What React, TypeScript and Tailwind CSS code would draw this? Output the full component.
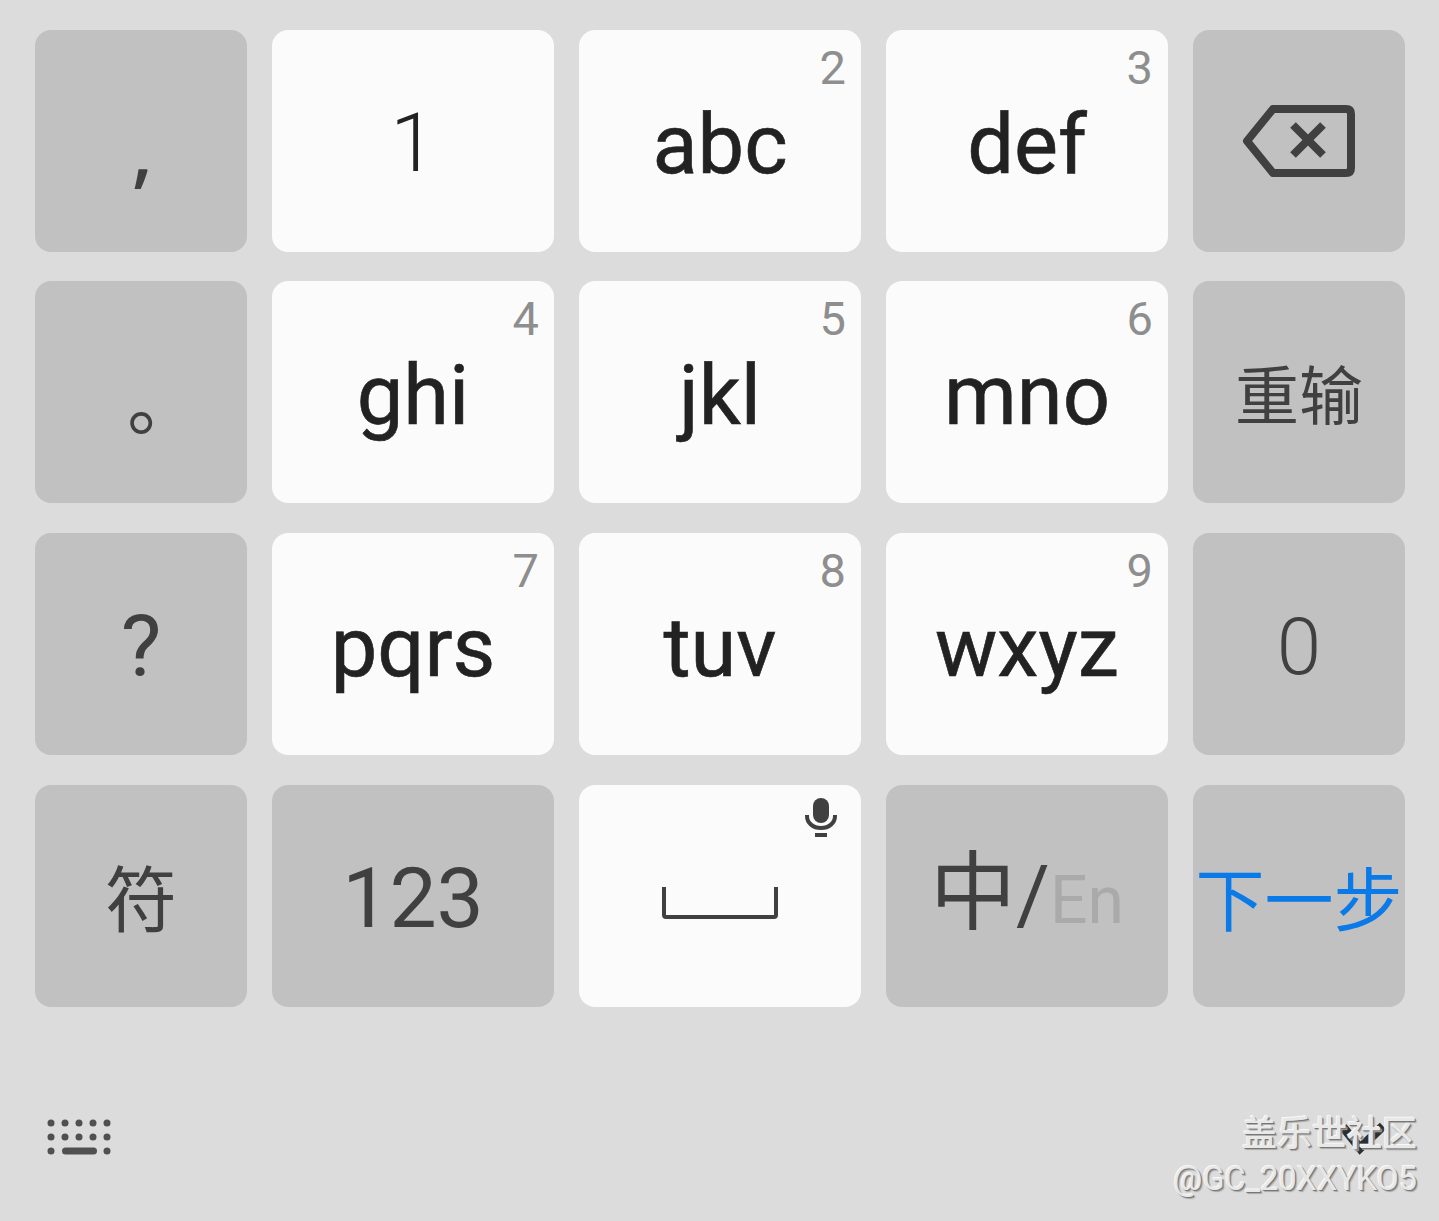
import type { ReactNode } from "react";

const ROBOTO = "font-['Roboto','Liberation_Sans',sans-serif]";
const CJK = "font-['Noto_Sans_CJK_SC',sans-serif]";

type KeyProps = {
  width: "narrow" | "wide";
  light?: boolean;
  hint?: string;
  children?: ReactNode;
};

function Key({ width, light, hint, children }: KeyProps) {
  return (
    <div
      className={`relative flex h-[222px] shrink-0 items-center justify-center rounded-[16px] ${
        width === "narrow" ? "w-[212px]" : "w-[282px]"
      } ${light ? "bg-[#fbfbfb] text-[#222222]" : "bg-[#c1c1c1] text-[#404040]"}`}
    >
      {hint && (
        <span className="absolute right-[15px] top-[10px] text-[47px] leading-[56px] text-[#8e8e8e]">
          {hint}
        </span>
      )}
      {children}
    </div>
  );
}

function Letters({ children }: { children: string }) {
  return <span className="mt-[6px] text-[83px] leading-none [-webkit-text-stroke:0.6px_#222222]">{children}</span>;
}

function Backspace() {
  return (
    <svg width="114" height="72" viewBox="0 0 114 72" className="text-[#404040]" fill="none">
      <path
        d="M31 4H104Q109 4 109 9V63Q109 68 104 68H31L5 36Z"
        stroke="currentColor"
        strokeWidth="8"
        strokeLinejoin="round"
      />
      <path d="M51 20L81 50M81 20L51 50" stroke="currentColor" strokeWidth="8" />
    </svg>
  );
}

function Mic() {
  return (
    <svg width="32" height="40" viewBox="0 0 32 40" className="absolute right-[24px] top-[13px]" fill="none">
      <rect x="8" y="0" width="16" height="25" rx="8" fill="#404040" />
      <path d="M2 17V18C2 25 8 30 16 30C24 30 30 25 30 18V17" stroke="#404040" strokeWidth="4" />
      <rect x="10" y="35" width="12" height="4" fill="#404040" />
    </svg>
  );
}

function SpaceBar() {
  return (
    <svg width="118" height="34" viewBox="0 0 118 34" className="mt-[14px]" fill="none">
      <path d="M3 1V29Q3 31 5 31H113Q115 31 115 29V1" stroke="#404040" strokeWidth="4" />
    </svg>
  );
}

function KeyboardIcon() {
  const dots = [0, 14, 28, 42, 56];
  return (
    <svg width="64" height="36" viewBox="0 0 64 36" fill="#505050">
      {dots.map((x) => (
        <circle key={`a${x}`} cx={x + 4} cy="4" r="3.5" />
      ))}
      {dots.map((x) => (
        <circle key={`b${x}`} cx={x + 4} cy="18" r="3.5" />
      ))}
      <circle cx="4" cy="32" r="3.5" />
      <rect x="15" y="28.5" width="35" height="7" rx="3.5" />
      <circle cx="60" cy="32" r="3.5" />
    </svg>
  );
}

export default function App() {
  return (
    <div className={`relative h-[1221px] w-[1439px] overflow-hidden bg-[#dcdcdc] pl-[35px] pt-[30px] ${ROBOTO}`}>
      <div className="mb-[29px] flex gap-[25px]">
        <Key width="narrow">
          <span className="ml-[3px] mt-[14px] font-['Noto_Sans',sans-serif] text-[80px] font-medium leading-none">,</span>
        </Key>
        <Key width="wide" light>
          <span className="mt-[4px] text-[82px] font-light leading-none">1</span>
        </Key>
        <Key width="wide" light hint="2">
          <Letters>abc</Letters>
        </Key>
        <Key width="wide" light hint="3">
          <Letters>def</Letters>
        </Key>
        <Key width="narrow">
          <Backspace />
        </Key>
      </div>

      <div className="mb-[30px] flex gap-[25px]">
        <Key width="narrow">
          <span className="mt-[53px] font-['Noto_Sans_CJK_TC',sans-serif] text-[72px] leading-none">。</span>
        </Key>
        <Key width="wide" light hint="4">
          <Letters>ghi</Letters>
        </Key>
        <Key width="wide" light hint="5">
          <Letters>jkl</Letters>
        </Key>
        <Key width="wide" light hint="6">
          <Letters>mno</Letters>
        </Key>
        <Key width="narrow">
          <span className={`-mt-[2px] text-[64px] leading-none ${CJK}`}>重输</span>
        </Key>
      </div>

      <div className="mb-[30px] flex gap-[25px]">
        <Key width="narrow">
          <span className="mt-[6px] text-[86px] leading-none">?</span>
        </Key>
        <Key width="wide" light hint="7">
          <Letters>pqrs</Letters>
        </Key>
        <Key width="wide" light hint="8">
          <Letters>tuv</Letters>
        </Key>
        <Key width="wide" light hint="9">
          <Letters>wxyz</Letters>
        </Key>
        <Key width="narrow">
          <span className="mt-[6px] text-[80px] font-light leading-none">0</span>
        </Key>
      </div>

      <div className="flex gap-[25px]">
        <Key width="narrow">
          <span className={`-mt-[2px] text-[72px] leading-none ${CJK}`}>符</span>
        </Key>
        <Key width="wide">
          <span className="mt-[6px] text-[84px] leading-none">123</span>
        </Key>
        <Key width="wide" light>
          <Mic />
          <SpaceBar />
        </Key>
        <Key width="wide">
          <span className="-mt-[14px] flex items-baseline leading-none">
            <span className={`text-[86px] ${CJK}`}>中</span>
            <span className="text-[82px] font-normal">/</span>
            <span className="text-[66px] text-[#aaaaaa]">En</span>
          </span>
        </Key>
        <Key width="narrow">
          <span className={`whitespace-nowrap text-[69px] leading-none text-[#0a7ae8] ${CJK}`}>下一步</span>
        </Key>
      </div>

      <div className="ml-[12px] mt-[112px]">
        <KeyboardIcon />
      </div>

      <svg width="50" height="36" viewBox="0 0 50 36" className="absolute left-[1338px] top-[1122px]" fill="none">
        <path d="M5 5L22 26L45 4" stroke="#2e2e2e" strokeWidth="9" />
      </svg>

      <div className="absolute right-[22px] top-[1110px] flex flex-col items-end text-[#e8e8e8] [text-shadow:1px_1px_0_#777777,2px_2px_1px_#a8a8a8,-1px_-1px_0_#f8f8f8]">
        <span className={`text-[35px] font-medium leading-[42px] ${CJK}`}>盖乐世社区</span>
        <span className="text-[32.4px] leading-[54px]">@GC_20XXYKO5</span>
      </div>
    </div>
  );
}
